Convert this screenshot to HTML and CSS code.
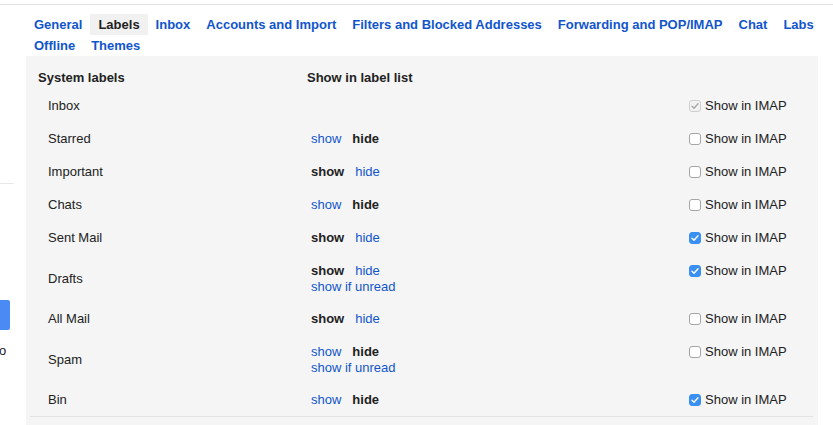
FILE: index.html
```html
<!DOCTYPE html>
<html>
<head>
<meta charset="utf-8">
<link rel="stylesheet" href="styles.css">
</head>
<body>
<div class="topline"></div>
<div class="layout">
  <aside class="sidebar">
    <div class="side-edge"></div>
    <div class="side-btn"></div>
    <div class="side-text">o</div>
  </aside>
  <main class="main">
    <nav class="tabs">
      <div class="tab-row">
        <a class="tab">General</a>
        <a class="tab active">Labels</a>
        <a class="tab">Inbox</a>
        <a class="tab">Accounts and Import</a>
        <a class="tab">Filters and Blocked Addresses</a>
        <a class="tab">Forwarding and POP/IMAP</a>
        <a class="tab">Chat</a>
        <a class="tab">Labs</a>
      </div>
      <div class="tab-row">
        <a class="tab">Offline</a>
        <a class="tab">Themes</a>
      </div>
    </nav>
    <section class="panel">
      <table class="labels">
        <thead>
          <tr>
            <th class="c-name">System labels</th>
            <th class="c-show">Show in label list</th>
            <th class="c-imap"></th>
          </tr>
        </thead>
        <tbody>
          <tr>
            <td class="name">Inbox</td>
            <td class="show"></td>
            <td class="imap"><label class="cb"><span class="box disabled"><svg viewBox="0 0 12 12"><path d="M3 6.3l2 2 4-4.6"/></svg></span>Show in IMAP</label></td>
          </tr>
          <tr>
            <td class="name">Starred</td>
            <td class="show"><a class="opt">show</a><b class="opt">hide</b></td>
            <td class="imap"><label class="cb"><span class="box"></span>Show in IMAP</label></td>
          </tr>
          <tr>
            <td class="name">Important</td>
            <td class="show"><b class="opt">show</b><a class="opt">hide</a></td>
            <td class="imap"><label class="cb"><span class="box"></span>Show in IMAP</label></td>
          </tr>
          <tr>
            <td class="name">Chats</td>
            <td class="show"><a class="opt">show</a><b class="opt">hide</b></td>
            <td class="imap"><label class="cb"><span class="box"></span>Show in IMAP</label></td>
          </tr>
          <tr>
            <td class="name">Sent Mail</td>
            <td class="show"><b class="opt">show</b><a class="opt">hide</a></td>
            <td class="imap"><label class="cb"><span class="box on"><svg viewBox="0 0 12 12"><path d="M3 6.3l2 2 4-4.6"/></svg></span>Show in IMAP</label></td>
          </tr>
          <tr>
            <td class="name">Drafts</td>
            <td class="show"><b class="opt">show</b><a class="opt">hide</a><div class="unread"><a>show if unread</a></div></td>
            <td class="imap"><label class="cb"><span class="box on"><svg viewBox="0 0 12 12"><path d="M3 6.3l2 2 4-4.6"/></svg></span>Show in IMAP</label></td>
          </tr>
          <tr>
            <td class="name">All Mail</td>
            <td class="show"><b class="opt">show</b><a class="opt">hide</a></td>
            <td class="imap"><label class="cb"><span class="box"></span>Show in IMAP</label></td>
          </tr>
          <tr>
            <td class="name">Spam</td>
            <td class="show"><a class="opt">show</a><b class="opt">hide</b><div class="unread"><a>show if unread</a></div></td>
            <td class="imap"><label class="cb"><span class="box"></span>Show in IMAP</label></td>
          </tr>
          <tr>
            <td class="name">Bin</td>
            <td class="show"><a class="opt">show</a><b class="opt">hide</b></td>
            <td class="imap"><label class="cb"><span class="box on"><svg viewBox="0 0 12 12"><path d="M3 6.3l2 2 4-4.6"/></svg></span>Show in IMAP</label></td>
          </tr>
        </tbody>
      </table>
    </section>
  </main>
</div>
</body>
</html>
```
FILE: styles.css
```css
html, body {
  margin: 0;
  padding: 0;
  background: #fff;
  font-family: "Liberation Sans", Arial, sans-serif;
  font-size: 13px;
  color: #222;
  overflow: hidden;
  height: 425px;
}

.topline {
  height: 4px;
  border-bottom: 1px solid #e2e2e2;
}

.layout {
  display: flex;
  height: 420px;
}

.sidebar {
  width: 26px;
  flex: none;
  overflow: hidden;
}

.side-edge {
  margin-top: 178px;
  width: 14px;
  height: 0;
  border-top: 1px solid #e8e8e8;
  border-radius: 0 4px 0 0;
}

.side-btn {
  margin-top: 116px;
  width: 10px;
  height: 30px;
  background: #4a8af4;
  border-radius: 0 2px 2px 0;
}

.side-text {
  margin-top: 13px;
  margin-left: -1px;
  line-height: 16px;
  color: #222;
}

.main {
  width: 792px;
  flex: none;
  display: flex;
  flex-direction: column;
}

.tabs {
  padding-top: 9px;
}

.tab-row {
  display: flex;
}

.tab {
  padding: 0 8px;
  line-height: 21px;
  font-weight: bold;
  color: #15c;
  white-space: nowrap;
}

.tab.active {
  background: #f1f1f1;
  color: #222;
}

.panel {
  flex: 1;
  background: #f5f5f5;
  padding: 0 5px 0 4px;
}

.labels {
  width: 100%;
  border-collapse: collapse;
  border-bottom: 1px solid #e3e3e3;
}

.labels th {
  text-align: left;
  font-weight: bold;
  line-height: 16px;
  height: 16px;
  padding: 14px 0 3px 0;
  vertical-align: top;
}

.labels th.c-name {
  width: 265px;
  padding-left: 8px;
}

.labels th.c-show {
  width: 374px;
  padding-left: 4px;
}

.labels td {
  line-height: 16px;
  padding: 9px 0 8px 0;
  vertical-align: top;
}

.labels td.name {
  padding-left: 18px;
  vertical-align: middle;
}

.labels td.show {
  padding-left: 8px;
}

.labels td.imap {
  padding-left: 8px;
}

.opt {
  display: inline-block;
  margin-right: 11px;
  vertical-align: top;
  height: 16px;
}

a.opt, .unread a {
  color: #15c;
}

b.opt {
  color: #222;
}

.unread {
  line-height: 15px;
  height: 15px;
}

.cb {
  display: flex;
  align-items: center;
  gap: 4px;
  height: 16px;
  color: #222;
}

.box {
  width: 10px;
  height: 10px;
  border: 1px solid #a5a5a5;
  border-radius: 3px;
  background: #fff;
  display: flex;
  align-items: center;
  justify-content: center;
  flex: none;
}

.box svg {
  width: 12px;
  height: 12px;
  flex: none;
}

.box svg path {
  fill: none;
  stroke: #fff;
  stroke-width: 1.4;
  stroke-linecap: round;
  stroke-linejoin: round;
}

.box.on {
  background: #3a8ff2;
  border-color: #3a8ff2;
}

.box.disabled {
  background: #f2f2f2;
  border-color: #cfcfcf;
}

.box.disabled svg path {
  stroke: #a8a8a8;
}
```
